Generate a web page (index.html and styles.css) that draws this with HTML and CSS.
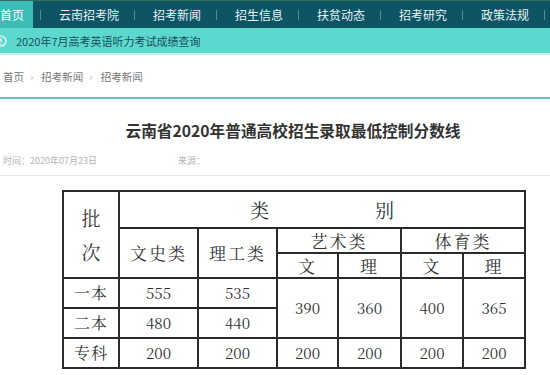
FILE: index.html
```html
<!DOCTYPE html>
<html lang="zh-CN">
<head>
<meta charset="utf-8">
<title>云南省2020年普通高校招生录取最低控制分数线</title>
<link rel="stylesheet" href="styles.css">
</head>
<body>
<header class="nav">
  <a class="nav-home" href="#">首页</a>
  <span class="sep"></span><a class="nav-link" href="#">云南招考院</a>
  <span class="sep"></span><a class="nav-link" href="#">招考新闻</a>
  <span class="sep"></span><a class="nav-link" href="#">招生信息</a>
  <span class="sep"></span><a class="nav-link" href="#">扶贫动态</a>
  <span class="sep"></span><a class="nav-link" href="#">招考研究</a>
  <span class="sep"></span><a class="nav-link" href="#">政策法规</a>
  <span class="sep"></span>
</header>
<div class="notice">
  <svg class="notice-icon" width="12" height="12" viewBox="0 0 12 12"><circle cx="6" cy="6" r="5" fill="none" stroke="#ffffff" stroke-width="1.2"/><path d="M6 3.2v3.6M6 8.2v1" stroke="#ffffff" stroke-width="1.3"/></svg>
  <span class="notice-text">2020年7月高考英语听力考试成绩查询</span>
</div>
<nav class="crumb">
  <a href="#">首页</a><span class="chev">›</span><a href="#">招考新闻</a><span class="chev">›</span><a href="#">招考新闻</a>
</nav>
<main class="article">
  <h1 class="title">云南省2020年普通高校招生录取最低控制分数线</h1>
  <div class="meta"><span class="meta-time">时间：2020年07月23日</span><span class="meta-src">来源：</span></div>
  <table class="score">
    <colgroup>
      <col class="c1"><col class="c2"><col class="c2"><col class="c4"><col class="c5"><col class="c6"><col class="c6">
    </colgroup>
    <tr class="r-a">
      <td rowspan="3" class="pici">批<br>次</td>
      <td colspan="6" class="leibie"><span>类</span><span>别</span></td>
    </tr>
    <tr class="r-b">
      <td rowspan="2" class="hd">文史类</td>
      <td rowspan="2" class="hd">理工类</td>
      <td colspan="2" class="hd">艺术类</td>
      <td colspan="2" class="hd">体育类</td>
    </tr>
    <tr class="r-b">
      <td class="hd">文</td><td class="hd">理</td><td class="hd">文</td><td class="hd">理</td>
    </tr>
    <tr class="r-d">
      <td class="lab">一本</td><td>555</td><td>535</td>
      <td rowspan="2">390</td><td rowspan="2">360</td><td rowspan="2">400</td><td rowspan="2">365</td>
    </tr>
    <tr class="r-d">
      <td class="lab">二本</td><td>480</td><td>440</td>
    </tr>
    <tr class="r-d">
      <td class="lab">专科</td><td>200</td><td>200</td><td>200</td><td>200</td><td>200</td><td>200</td>
    </tr>
  </table>
</main>
</body>
</html>
```
FILE: styles.css
```css
html, body {
  margin: 0;
  padding: 0;
  overflow: hidden;
  background: #ffffff;
}
body {
  font-family: "Noto Sans CJK SC", "Noto Sans", sans-serif;
  color: #333333;
  width: 550px;
}
a { text-decoration: none; color: inherit; }

.nav {
  display: flex;
  align-items: center;
  height: 28px;
  background: #0d5565;
  border-top: 1px solid #2f6e5a;
  box-sizing: border-box;
  white-space: nowrap;
  overflow: hidden;
}
.nav-home {
  display: block;
  width: 33px;
  height: 27px;
  line-height: 27px;
  background: #3bbdb5;
  color: #ffffff;
  font-size: 12px;
  margin-right: 7px;
}
.sep {
  flex: none;
  width: 1px;
  height: 10px;
  background: #4e8e98;
}
.nav-link {
  flex: none;
  padding: 0 15px 0 18px;
  font-size: 12px;
  line-height: 27px;
  color: #e6f1f2;
}

.notice {
  display: flex;
  align-items: center;
  height: 25px;
  background: #5cd8cf;
  border-bottom: 2px solid #c4f1ed;
  overflow: hidden;
}
.notice-icon { flex: none; margin-left: -5px; }
.notice-text {
  margin-left: 9px;
  font-size: 11px;
  color: #174f5a;
}

.crumb {
  display: flex;
  align-items: center;
  height: 42px;
  padding-left: 3px;
  font-size: 10.5px;
  color: #777777;
  border-bottom: 2px solid #5ac7c6;
}
.chev {
  color: #bbbbbb;
  padding: 0 8px 0 6px;
  font-size: 11px;
}

.article {
  width: 550px;
}
.title {
  margin: 21px 0 0;
  padding-left: 36px;
  text-align: center;
  font-size: 15.7px;
  line-height: 22px;
  font-weight: bold;
  color: #333333;
}
.meta {
  display: flex;
  margin-top: 12px;
  height: 22px;
  line-height: 14px;
  font-size: 9px;
  color: #b5b5b5;
  border-bottom: 1px solid #e6e6e6;
  box-sizing: border-box;
}
.meta-time { padding-left: 3px; width: 175px; }

.score {
  margin: 14px 0 0 62px;
  border-collapse: collapse;
  table-layout: fixed;
  width: 462px;
  font-family: "Noto Serif CJK SC", "Liberation Serif", "Noto Sans CJK SC", serif;
  color: #333333;
}
.c1 { width: 56px; }
.c2 { width: 79px; }
.c4 { width: 61px; }
.c5 { width: 63px; }
.c6 { width: 62px; }
.score td {
  border: 2px solid #2b2b2b;
  text-align: center;
  padding: 0;
  font-size: 15px;
  line-height: 18px;
}
.r-a { height: 37px; }
.r-b { height: 25px; }
.r-d { height: 30px; }
.score td.pici {
  font-size: 19px;
  line-height: 34px;
}
.score td.leibie {
  font-size: 19px;
}
.leibie span { padding: 0 53px; }
.score td.hd {
  font-size: 17px;
  letter-spacing: 2px;
}
.score td.lab {
  font-size: 16px;
  letter-spacing: 1px;
}
```
